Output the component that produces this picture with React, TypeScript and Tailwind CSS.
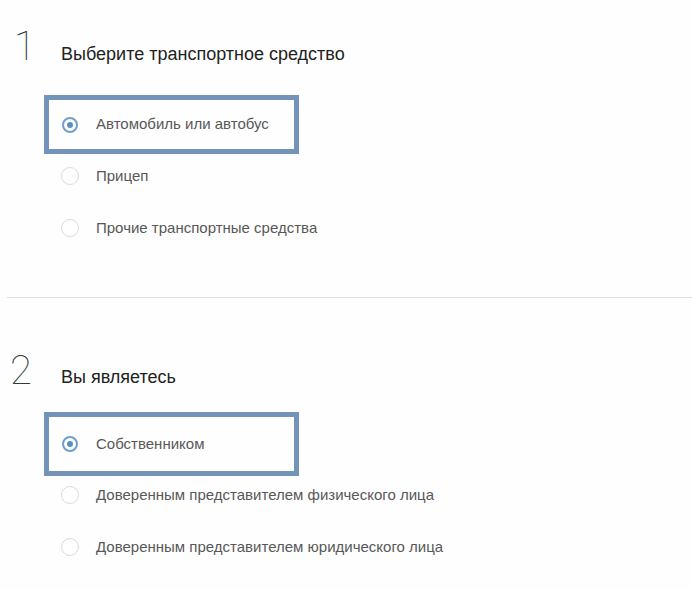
type Option = { label: string; checked?: boolean }

type Section = {
  num: string
  title: string
  options: Option[]
}

const sections: Section[] = [
  {
    num: '1',
    title: 'Выберите транспортное средство',
    options: [
      { label: 'Автомобиль или автобус', checked: true },
      { label: 'Прицеп' },
      { label: 'Прочие транспортные средства' },
    ],
  },
  {
    num: '2',
    title: 'Вы являетесь',
    options: [
      { label: 'Собственником', checked: true },
      { label: 'Доверенным представителем физического лица' },
      { label: 'Доверенным представителем юридического лица' },
    ],
  },
]

function Radio({ checked }: { checked?: boolean }) {
  if (checked) {
    return (
      <span className="w-[18px] h-[18px] shrink-0 flex items-center justify-center">
        <span className="w-[16px] h-[16px] rounded-full border-2 border-[#6e9fcf] flex items-center justify-center">
          <span className="w-[6px] h-[6px] rounded-full bg-[#5b8fc2]" />
        </span>
      </span>
    )
  }
  return <span className="w-[18px] h-[18px] shrink-0 rounded-full border border-[#dadada] bg-white" />
}

function Row({ option }: { option: Option }) {
  return (
    <div className="flex items-center h-[18px] gap-[17px]">
      <Radio checked={option.checked} />
      <span className="text-[15px] text-[#585858] whitespace-nowrap">{option.label}</span>
    </div>
  )
}

function Step({ section, first }: { section: Section; first?: boolean }) {
  const selected = section.options.filter((o) => o.checked)
  const rest = section.options.filter((o) => !o.checked)

  return (
    <div className={first ? 'pt-[27px]' : 'pt-[53px]'}>
      {/* header */}
      <div className="flex items-start">
        <span
          className={
            'w-[44px] text-[40px] leading-[40px] font-thin text-[#2f3d36] ' +
            (first ? 'pl-[14px]' : 'pl-[10px]')
          }
          style={{ fontFamily: 'Roboto, sans-serif' }}
        >
          {section.num}
        </span>
        <h2 className={'pl-[17px] text-[18px] leading-[24px] text-[#222222] ' + (first ? 'mt-[15px]' : 'mt-[14px]')}>
          {section.title}
        </h2>
      </div>

      {/* options */}
      <div className="ml-[44px]">
        <div
          className={
            'w-[255px] border-[5px] border-[#7393b8] pl-[12px] flex items-center ' +
            (first ? 'mt-[28px] h-[59px]' : 'mt-[21px] h-[64px]')
          }
        >
          {selected.map((o) => (
            <Row key={o.label} option={o} />
          ))}
        </div>
        <div className={'flex flex-col gap-[34px] pl-[17px] ' + (first ? 'pt-[13px]' : 'pt-[10px]')}>
          {rest.map((o) => (
            <Row key={o.label} option={o} />
          ))}
        </div>
      </div>
    </div>
  )
}

export default function App() {
  return (
    <div
      className="w-[692px] h-[589px] bg-[#fefefe] overflow-hidden"
      style={{ fontFamily: '"Liberation Sans", Arial, sans-serif' }}
    >
      <Step section={sections[0]} first />
      <div className="mt-[60px] ml-[7px] h-px bg-[#dedede]" />
      <Step section={sections[1]} />
    </div>
  )
}
